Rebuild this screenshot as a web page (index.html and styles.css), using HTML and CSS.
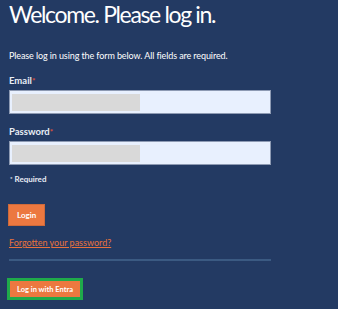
FILE: index.html
```html
<!DOCTYPE html>
<html lang="en">
<head>
<meta charset="utf-8">
<title>Log in</title>
<link rel="stylesheet" href="styles.css">
</head>
<body>
<main class="page">
  <h1 class="title">Welcome. Please log in.</h1>
  <p class="intro">Please log in using the form below. All fields are required.</p>
  <form class="form">
    <label class="label">Email<span class="req">*</span></label>
    <div class="field"><div class="mask"></div></div>
    <label class="label label-pw">Password<span class="req">*</span></label>
    <div class="field"><div class="mask"></div></div>
    <p class="required"><span class="star">*</span> Required</p>
    <button type="button" class="btn">Login</button>
    <a class="forgot" href="#">Forgotten your password?</a>
    <hr class="rule">
    <div class="focus-ring"><button type="button" class="btn btn-entra">Log in with Entra</button></div>
  </form>
</main>
</body>
</html>
```

FILE: styles.css
```css
html, body {
  margin: 0;
  padding: 0;
  background: #233a63;
}
body {
  font-family: Lato, "Noto Sans", sans-serif;
  color: #ffffff;
  height: 309px;
  overflow: hidden;
}
.page {
  padding: 0 0 0 9px;
  width: 262px;
}
.title {
  margin: 0;
  font-size: 23px;
  font-weight: 400;
  line-height: 29px;
  letter-spacing: -1.35px;
}
.intro {
  margin: 21px 0 0;
  font-size: 9px;
  line-height: 11px;
  letter-spacing: -0.1px;
}
.form {
  display: flex;
  flex-direction: column;
  align-items: flex-start;
}
.label {
  margin-top: 14px;
  font-size: 9.5px;
  font-weight: 700;
  line-height: 12px;
  color: #e9edf5;
}
.label-pw {
  margin-top: 12px;
}
.req {
  color: #e2513a;
  font-size: 8px;
  vertical-align: top;
}
.field {
  margin-top: 3px;
  box-sizing: border-box;
  width: 262px;
  height: 24px;
  background: #e8f0fe;
  border: 1px solid #8d9ab3;
  padding: 3px 2px;
}
.mask {
  width: 128px;
  height: 17px;
  background: #d9d9d9;
}
.required {
  margin: 9px 0 0 1px;
  font-size: 8px;
  font-weight: 700;
  line-height: 10px;
  color: #e9edf5;
}
.star {
  font-size: 6px;
  vertical-align: top;
}
.btn {
  margin-top: 21px;
  border: 0;
  background: #ec7840;
  color: #ffffff;
  font-family: Lato, "Noto Sans", sans-serif;
  font-weight: 700;
  font-size: 8px;
  height: 20px;
  padding: 0 8px;
  border-radius: 0;
  box-shadow: 0 0 0 1px #cf6a3a;
}
.forgot {
  margin-top: 12px;
  font-size: 9px;
  line-height: 11px;
  color: #e8723c;
}
.rule {
  align-self: stretch;
  margin: 11px 0 0;
  border: 0;
  height: 2px;
  background: #3b5a82;
}
.focus-ring {
  margin: 17px 0 0 -2px;
  border: 3px solid #1faa4a;
}
.btn-entra {
  display: block;
  margin: 0;
  height: 16px;
  padding: 0 7px;
  font-size: 7.5px;
  box-shadow: none;
}
```
